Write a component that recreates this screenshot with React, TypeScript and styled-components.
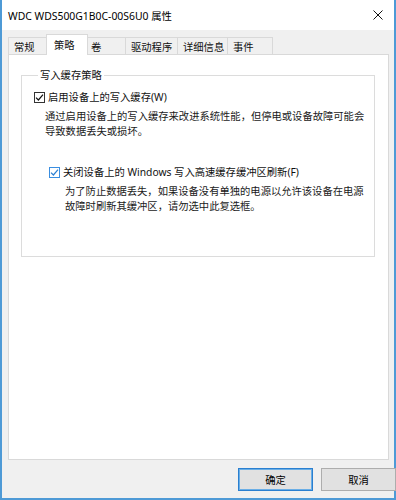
import React from 'react';
import styled, { createGlobalStyle } from 'styled-components';

const GlobalStyle = createGlobalStyle`
  html, body {
    margin: 0;
    padding: 0;
    background: #f0f0f0;
  }
  * {
    box-sizing: border-box;
  }
`;

const FONT = `"Noto Sans", "Noto Sans CJK SC", sans-serif`;

const Window = styled.div`
  width: 396px;
  height: 500px;
  display: flex;
  flex-direction: column;
  background: #f0f0f0;
  border-left: 2px solid #4e9ad6;
  border-right: 2px solid #4e9ad6;
  border-bottom: 2px solid #4e9ad6;
  font-family: ${FONT};
  font-size: 10.3px;
  color: #111;
`;

const TitleBar = styled.div`
  height: 30px;
  flex: none;
  display: flex;
  align-items: center;
  justify-content: space-between;
  padding: 0 10px 0 6px;
  background: #ffffff;
  font-size: 10.4px;
  color: #000;
`;

const CloseButton = styled.span`
  display: flex;
  width: 12px;
  height: 12px;
  align-items: center;
  justify-content: center;
`;

const Body = styled.div`
  flex: 1;
  display: flex;
  flex-direction: column;
  padding: 4px 5px 0 6px;
`;

const TabStrip = styled.div`
  display: flex;
  align-items: flex-end;
  height: 21px;
  flex: none;
  position: relative;
  z-index: 1;
  margin-bottom: -1px;
`;

const Tab = styled.div<{ $w: number; $active?: boolean }>`
  width: ${(p) => p.$w}px;
  height: ${(p) => (p.$active ? 21 : 18)}px;
  margin: ${(p) => (p.$active ? '0 -2px' : '0')};
  padding-left: ${(p) => (p.$active ? 7 : 5)}px;
  padding-bottom: ${(p) => (p.$active ? 2 : 0)}px;
  display: flex;
  align-items: center;
  background: ${(p) => (p.$active ? '#ffffff' : '#f0f0f0')};
  border: 1px solid #d9d9d9;
  border-bottom: ${(p) => (p.$active ? 'none' : '1px solid #d9d9d9')};
  border-left: ${(p) => (p.$active ? '1px solid #d9d9d9' : 'none')};
  position: relative;
  z-index: ${(p) => (p.$active ? 2 : 1)};
  &:first-child {
    border-left: 1px solid #d9d9d9;
  }
  white-space: nowrap;
`;

const Panel = styled.div`
  height: 406px;
  background: #ffffff;
  border: 1px solid #d9d9d9;
  padding: 13px 13px 0 12px;
`;

const GroupBox = styled.fieldset`
  margin: 0;
  height: 189px;
  border: 1px solid #dcdcdc;
  padding: 6px 10px 0 12px;
  min-width: 0;
`;

const Legend = styled.legend`
  padding: 0 2px;
  margin-left: 4px;
  line-height: 14px;
`;

const OptionRow = styled.div<{ $indent: number; $top: number }>`
  display: flex;
  align-items: center;
  gap: 3px;
  margin-left: ${(p) => p.$indent}px;
  margin-top: ${(p) => p.$top}px;
  line-height: 14px;
  white-space: nowrap;
`;

const Box = styled.span<{ $blue?: boolean }>`
  width: 11px;
  height: 11px;
  flex: none;
  border: 1px solid ${(p) => (p.$blue ? '#3a8ee0' : '#333333')};
  background: #ffffff;
  display: flex;
  align-items: center;
  justify-content: center;
`;

const Description = styled.p<{ $indent: number }>`
  margin: 5px 0 0 ${(p) => p.$indent}px;
  line-height: 15px;
  color: #1a1a1a;
  white-space: nowrap;
`;

const Footer = styled.div`
  height: 39px;
  flex: none;
  display: flex;
  justify-content: flex-end;
  align-items: flex-start;
  gap: 8px;
  padding: 8px 0 0 0;
  margin-right: -2px;
`;

const Button = styled.button<{ $primary?: boolean }>`
  width: 75px;
  height: 23px;
  font-family: ${FONT};
  font-size: 10.3px;
  color: #000;
  background: #e1e1e1;
  border: 1px solid ${(p) => (p.$primary ? '#2a7fd0' : '#adadad')};
  box-shadow: ${(p) => (p.$primary ? 'inset 0 0 0 1px #6aaee6' : 'none')};
  padding: 0;
`;

function CheckBox({ blue }: { blue?: boolean }) {
  const c = blue ? '#2b7fd2' : '#111';
  return (
    <Box $blue={blue}>
      <svg width="9" height="9" viewBox="0 0 9 9">
        <path d="M1 4.6 L3.4 7 L8 1.6" fill="none" stroke={c} strokeWidth="1.2" />
      </svg>
    </Box>
  );
}

const tabs: { label: string; w: number }[] = [
  { label: '常规', w: 40 },
  { label: '策略', w: 42 },
  { label: '卷', w: 40 },
  { label: '驱动程序', w: 52 },
  { label: '详细信息', w: 50 },
  { label: '事件', w: 45 },
];

export default function App() {
  return (
    <>
      <GlobalStyle />
      <Window>
        <TitleBar>
          <span>WDC WDS500G1B0C-00S6U0 属性</span>
          <CloseButton>
            <svg width="10" height="10" viewBox="0 0 10 10">
              <path d="M0.5 0.5 L9.5 9.5 M9.5 0.5 L0.5 9.5" stroke="#111" strokeWidth="1" />
            </svg>
          </CloseButton>
        </TitleBar>
        <Body>
          <TabStrip>
            {tabs.map((t) => (
              <Tab key={t.label} $w={t.w} $active={t.label === '策略'}>
                {t.label}
              </Tab>
            ))}
          </TabStrip>
          <Panel>
            <GroupBox>
              <Legend>写入缓存策略</Legend>
              <OptionRow $indent={0} $top={2}>
                <CheckBox />
                <span>启用设备上的写入缓存(W)</span>
              </OptionRow>
              <Description $indent={11}>
                通过启用设备上的写入缓存来改进系统性能，但停电或设备故障可能会
                <br />
                导致数据丢失或损坏。
              </Description>
              <OptionRow $indent={15} $top={26}>
                <CheckBox blue />
                <span>关闭设备上的 Windows 写入高速缓存缓冲区刷新(F)</span>
              </OptionRow>
              <Description $indent={31}>
                为了防止数据丢失，如果设备没有单独的电源以允许该设备在电源
                <br />
                故障时刷新其缓冲区，请勿选中此复选框。
              </Description>
            </GroupBox>
          </Panel>
        </Body>
        <Footer>
          <Button $primary>确定</Button>
          <Button>取消</Button>
        </Footer>
      </Window>
    </>
  );
}
